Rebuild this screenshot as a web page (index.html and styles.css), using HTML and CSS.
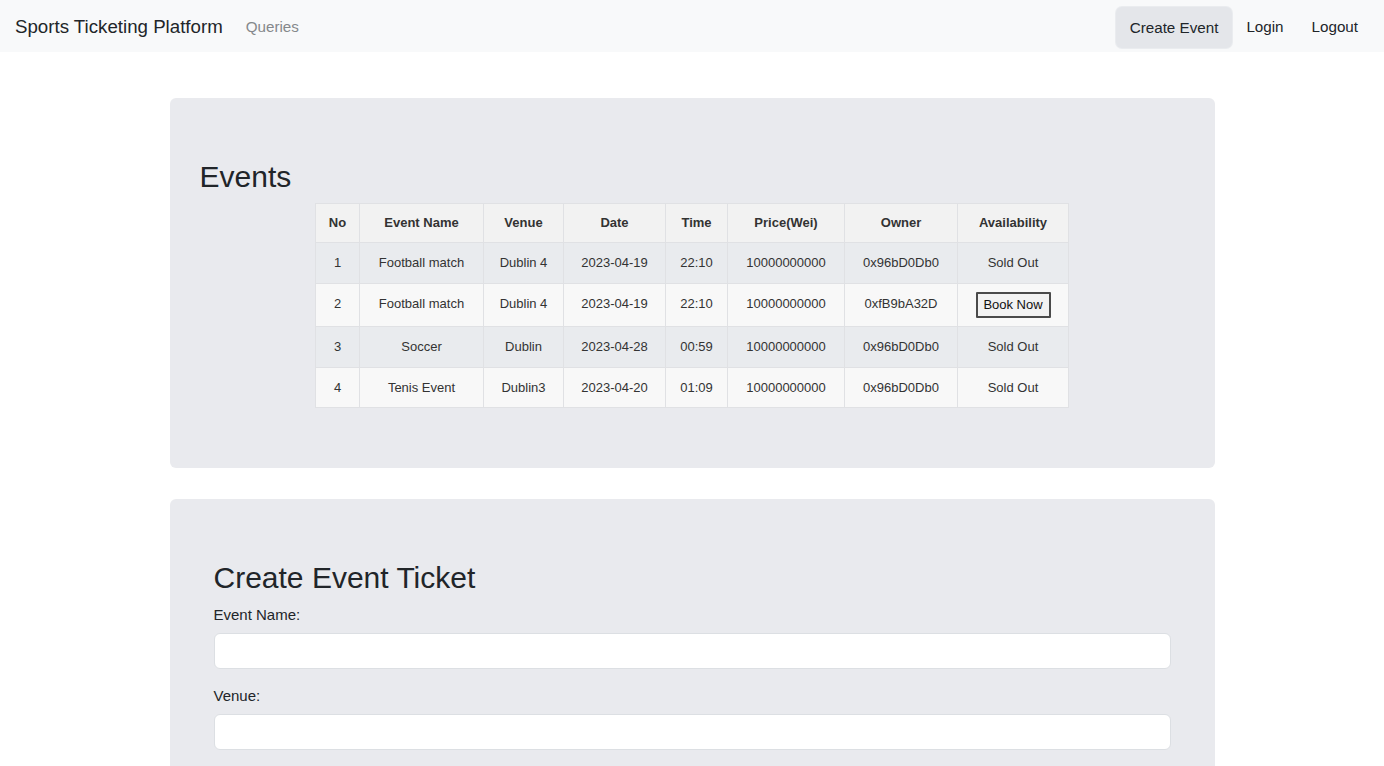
FILE: index.html
```html
<!DOCTYPE html>
<html lang="en">
<head>
<meta charset="utf-8">
<title>Sports Ticketing Platform</title>
<link rel="stylesheet" href="styles.css">
</head>
<body>
<nav class="navbar">
  <div class="nav-left">
    <a class="brand" href="#">Sports Ticketing Platform</a>
    <a class="nav-link muted" href="#">Queries</a>
  </div>
  <div class="nav-right">
    <a class="nav-link active" href="#">Create Event</a>
    <a class="nav-link" href="#">Login</a>
    <a class="nav-link" href="#">Logout</a>
  </div>
</nav>

<main class="page">
  <section class="card card-events">
    <h2 class="title">Events</h2>
    <table class="events">
      <thead>
        <tr>
          <th class="c-no">No</th>
          <th class="c-name">Event Name</th>
          <th class="c-venue">Venue</th>
          <th class="c-date">Date</th>
          <th class="c-time">Time</th>
          <th class="c-price">Price(Wei)</th>
          <th class="c-owner">Owner</th>
          <th class="c-avail">Availability</th>
        </tr>
      </thead>
      <tbody>
        <tr>
          <td>1</td><td>Football match</td><td>Dublin 4</td><td>2023-04-19</td><td>22:10</td><td>10000000000</td><td>0x96bD0Db0</td><td>Sold Out</td>
        </tr>
        <tr class="tall">
          <td>2</td><td>Football match</td><td>Dublin 4</td><td>2023-04-19</td><td>22:10</td><td>10000000000</td><td>0xfB9bA32D</td><td><button class="book">Book Now</button></td>
        </tr>
        <tr>
          <td>3</td><td>Soccer</td><td>Dublin</td><td>2023-04-28</td><td>00:59</td><td>10000000000</td><td>0x96bD0Db0</td><td>Sold Out</td>
        </tr>
        <tr class="last">
          <td>4</td><td>Tenis Event</td><td>Dublin3</td><td>2023-04-20</td><td>01:09</td><td>10000000000</td><td>0x96bD0Db0</td><td>Sold Out</td>
        </tr>
      </tbody>
    </table>
  </section>

  <section class="card card-form">
    <h2 class="title">Create Event Ticket</h2>
    <form class="form">
      <div class="field">
        <label class="label" for="ename">Event Name:</label>
        <input class="input" id="ename" type="text">
      </div>
      <div class="field">
        <label class="label" for="venue">Venue:</label>
        <input class="input" id="venue" type="text">
      </div>
    </form>
  </section>
</main>
</body>
</html>
```

FILE: styles.css
```css
* { box-sizing: border-box; }

html, body {
  margin: 0;
  padding: 0;
  background: #ffffff;
  font-family: "Liberation Sans", Arial, sans-serif;
  color: #212529;
}

a { text-decoration: none; color: inherit; }

.navbar {
  height: 52px;
  background: #f8f9fa;
  display: flex;
  align-items: center;
  justify-content: space-between;
  padding: 2px 12px 0 15px;
}

.nav-left, .nav-right {
  display: flex;
  align-items: center;
}

.brand {
  font-size: 18.7px;
  color: #212529;
  margin-right: 10px;
}

.nav-link {
  font-size: 15.2px;
  line-height: 22px;
  padding: 9px 14px;
  color: #212529;
  border-radius: 6px;
}

.nav-link.muted {
  color: #85888b;
  padding-left: 13px;
}

.nav-link.active {
  background: #e4e6ea;
  box-shadow: 0 0 0 1px #eaecef;
  padding: 10px 14px 9px;
}

.page {
  width: 1045px;
  margin: 46px auto 0;
  display: flex;
  flex-direction: column;
  gap: 31px;
}

.card {
  background: #e9eaee;
  border-radius: 6px;
}

.card-events {
  padding: 61px 30px 60px;
}

.card-form {
  padding: 61px 44px 40px;
}

.title {
  margin: 0 0 8px;
  font-size: 30px;
  line-height: 36px;
  font-weight: 400;
  color: #212529;
}

.events {
  margin: 0 auto;
  border-collapse: collapse;
  font-size: 13px;
  color: #333333;
  text-align: center;
}

.events th, .events td {
  border: 1px solid #e0e1e4;
  padding: 12px 8px;
  line-height: 16px;
}

.events th {
  background: #f2f2f2;
  font-weight: 700;
  line-height: 14px;
}

.events tbody tr:nth-child(odd) td { background: #e9ebee; }
.events tbody tr:nth-child(even) td { background: #f8f8f8; }

.events tr.tall td { padding-top: 12px; padding-bottom: 13px; }
.events tr.last td { padding-top: 12px; padding-bottom: 11px; }

.c-no { width: 44px; }
.c-name { width: 124px; }
.c-venue { width: 80px; }
.c-date { width: 102px; }
.c-time { width: 62px; }
.c-price { width: 117px; }
.c-owner { width: 113px; }
.c-avail { width: 111px; }

.book {
  font-family: "Liberation Sans", Arial, sans-serif;
  font-size: 13px;
  color: #111;
  background: #f2f2f2;
  border: 2px solid #4a4a4a;
  border-radius: 1px;
  height: 26px;
  width: 75px;
  padding: 0;
  margin: -5px 0;
  vertical-align: middle;
}

.form {
  display: flex;
  flex-direction: column;
  gap: 16px;
}

.field {
  display: flex;
  flex-direction: column;
}

.label {
  font-size: 15px;
  line-height: 22px;
  margin-bottom: 7px;
  color: #212529;
}

.input {
  height: 36px;
  width: 100%;
  background: #ffffff;
  border: 1px solid #dcdfe3;
  border-radius: 6px;
  font-size: 15px;
  padding: 6px 12px;
}
```
